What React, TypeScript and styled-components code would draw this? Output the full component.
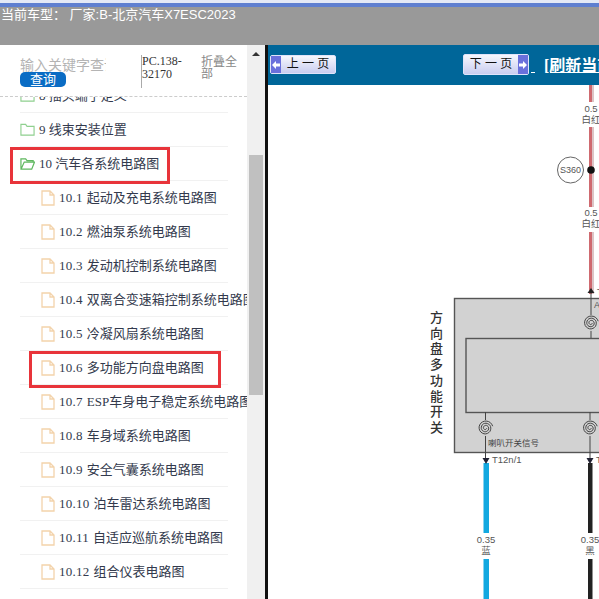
import React from 'react';
import styled, { createGlobalStyle } from 'styled-components';

const SERIF = '"Liberation Serif", "Noto Sans CJK SC", serif';
const SANS = '"Liberation Sans", "Noto Sans CJK SC", sans-serif';

const GlobalStyle = createGlobalStyle`
  html, body { margin: 0; padding: 0; background: #fff; overflow: hidden; }
`;

const Page = styled.div`
  width: 599px;
  height: 599px;
  display: flex;
  flex-direction: column;
  overflow: hidden;
`;
const TopEdge = styled.div`
  height: 3px;
  background: #e4e9f6;
  border-bottom: 4px solid #5f7fd0;
  flex: none;
`;
const ModelBar = styled.div`
  height: 38px;
  flex: none;
  background: #999;
  color: #fff;
  font: 13px/15px ${SANS};
  padding-left: 1px;
  white-space: nowrap;
`;
const Body = styled.div`
  flex: 1;
  min-height: 0;
  display: flex;
`;
const Sidebar = styled.div`
  width: 265px;
  flex: none;
  display: flex;
  background: #fff;
`;
const SideMain = styled.div`
  width: 247px;
  flex: none;
  overflow: hidden;
  display: flex;
  flex-direction: column;
`;
const SearchArea = styled.div`
  height: 52px;
  flex: none;
  box-sizing: border-box;
  border-bottom: 1px dashed #ccc;
  display: flex;
  padding: 10px 0 0 20px;
`;
const SearchCol = styled.div`
  width: 121px;
  flex: none;
`;
const Placeholder = styled.div`
  width: 86px;
  height: 17px;
  overflow: hidden;
  white-space: nowrap;
  color: #b4b4b4;
  font: 14px/20px ${SANS};
`;
const QueryButton = styled.button`
  display: block;
  width: 46px;
  height: 15px;
  padding: 0;
  border: 0;
  border-radius: 5px;
  background: #0a6cc4;
  color: #fff;
  font: 13px/15px ${SANS};
`;
const PartCode = styled.div`
  width: 60px;
  height: 33px;
  flex: none;
  box-sizing: border-box;
  border-left: 1px solid #aaa;
  font: 12px/13px ${SERIF};
  color: #333;
`;
const Collapse = styled.div`
  width: 38px;
  flex: none;
  color: #888;
  font: 12px/12px ${SANS};
  margin-top: 1px;
`;
const TreeViewport = styled.div`
  flex: 1;
  min-height: 0;
  overflow: hidden;
`;
const Tree = styled.div`
  margin-top: -18px;
  display: flex;
  flex-direction: column;
`;
const Row = styled.div<{ $child?: boolean }>`
  position: relative;
  height: 34px;
  box-sizing: border-box;
  width: 208px;
  margin-left: 20px;
  border-bottom: 1px solid #f1f1f1;
  display: flex;
  align-items: center;
  gap: 4px;
  padding-left: ${p => (p.$child ? '21px' : '0')};
  white-space: nowrap;
  color: #333a4d;
  font: 13px/16px ${SERIF};
`;
const RowNumber = styled.span`
  letter-spacing: 0.25px;
  margin-right: 4px;
`;
const RedBox = styled.span<{ $left: number; $width: number }>`
  position: absolute;
  left: ${p => p.$left}px;
  width: ${p => p.$width}px;
  top: 0;
  height: 37px;
  box-sizing: border-box;
  border: 3px solid #e8343a;
`;
const ScrollTrack = styled.div`
  width: 18px;
  flex: none;
  background: #f0f0f0;
  display: flex;
  flex-direction: column;
  align-items: center;
`;
const ScrollUp = styled.div`
  margin-top: 7px;
  width: 0;
  height: 0;
  border-left: 4px solid transparent;
  border-right: 4px solid transparent;
  border-bottom: 4px solid #333;
`;
const ScrollThumb = styled.div`
  margin-top: 99px;
  width: 14px;
  height: 240px;
  background: #c0c0c0;
`;
const Divider = styled.div`
  width: 3px;
  flex: none;
  background: #111;
`;
const Viewer = styled.div`
  flex: 1;
  min-width: 0;
  display: flex;
  flex-direction: column;
  overflow: hidden;
`;
const ViewerHead = styled.div`
  height: 40px;
  flex: none;
  background: #006699;
  display: flex;
  align-items: flex-start;
  padding: 10px 0 0 2px;
  box-sizing: border-box;
  white-space: nowrap;
`;
const PageButton = styled.div<{ $next?: boolean }>`
  width: 66px;
  height: ${p => (p.$next ? '21px' : '19px')};
  margin-top: ${p => (p.$next ? '-1px' : '0')};
  flex: none;
  box-sizing: border-box;
  display: flex;
  flex-direction: ${p => (p.$next ? 'row-reverse' : 'row')};
  align-items: center;
  background: linear-gradient(#f6f7fd, #c9cdf0);
  border: 1px solid #dfe3fa;
  border-radius: 2px;
  color: #111;
  font: 12px/15px ${SANS};
  margin-right: ${p => (p.$next ? '0' : '127px')};
`;
const ArrowCap = styled.span`
  width: 10px;
  height: 100%;
  flex: none;
  background: #6a70dc;
  display: flex;
  align-items: center;
  justify-content: center;
`;
const PageLabel = styled.span`
  flex: 1;
  text-align: center;
`;
const Refresh = styled.a<{ $gap: number }>`
  margin: 1px 0 0 ${p => p.$gap}px;
  color: #fff;
  font: bold 16px/20px ${SERIF};
  text-decoration: underline;
`;
const Canvas = styled.svg`
  display: block;
  flex: 1;
  min-height: 0;
  width: 100%;
  background: #fff;
`;

const FolderIcon = ({ open }: { open?: boolean }) => (
  <svg width="15" height="15" viewBox="0 0 16 15" style={{ flex: 'none' }}>
    {open ? (
      <path d="M1 13V2.5h5l1.5 2H14V6H4.5L1.2 13.5H12.5L15.5 6H14" fill="none" stroke="#5fb85f" strokeWidth="1.3" />
    ) : (
      <path d="M1 13.5V2h5l1.5 2.2H15v9.3z" fill="none" stroke="#8fd08f" strokeWidth="1.2" />
    )}
  </svg>
);

const FileIcon = () => (
  <svg width="14" height="16" viewBox="0 0 14 16" style={{ flex: 'none' }}>
    <path d="M1 1h8l4 4v10H1z M9 1v4h4" fill="none" stroke="#f3d3ab" strokeWidth="1.3" />
  </svg>
);

const Arrow = ({ dir }: { dir: 'left' | 'right' }) => (
  <svg width="8" height="8" viewBox="0 0 8 8">
    <path d={dir === 'left' ? 'M0 4l4-4v2.5h4v3H4V8z' : 'M8 4L4 0v2.5H0v3h4V8z'} fill="#fff" />
  </svg>
);

// three turns of an Archimedean spiral, like the connector symbol on the plan
const spiralPoints = (cx: number, cy: number) => {
  const pts: string[] = [];
  for (let a = 0; a <= Math.PI * 6; a += 0.3) {
    const r = 1 + (a / (Math.PI * 6)) * 6.5;
    pts.push(`${(cx + r * Math.cos(a)).toFixed(1)},${(cy + r * Math.sin(a)).toFixed(1)}`);
  }
  return pts.join(' ');
};

const Coil = ({ x, y }: { x: number; y: number }) => (
  <g>
    <circle cx={x} cy={y} r="8" fill="#d2d2d2" />
    <polyline points={spiralPoints(x, y)} fill="none" stroke="#444" strokeWidth="1" />
  </g>
);

const RedWhiteWire = ({ y, height }: { y: number; height: number }) => (
  <g>
    <rect x="589" y={y} width="3" height={height} fill="#cf6a70" />
    <rect x="592" y={y} width="2" height={height} fill="#dcc4c6" />
  </g>
);

const WireLabel = ({ x, y, size, text }: { x: number; y: number; size: string; text: string }) => (
  <g fill="#555" textAnchor="middle" fontSize="9.5">
    <text x={x} y={y} fontFamily="Liberation Sans">{size}</text>
    <text x={x} y={y + 11} fontFamily="Noto Sans CJK SC">{text}</text>
  </g>
);

const sections = [
  ['10.1', '起动及充电系统电路图'],
  ['10.2', '燃油泵系统电路图'],
  ['10.3', '发动机控制系统电路图'],
  ['10.4', '双离合变速箱控制系统电路图'],
  ['10.5', '冷凝风扇系统电路图'],
  ['10.6', '多功能方向盘电路图'],
  ['10.7', 'ESP车身电子稳定系统电路图'],
  ['10.8', '车身域系统电路图'],
  ['10.9', '安全气囊系统电路图'],
  ['10.10', '泊车雷达系统电路图'],
  ['10.11', '自适应巡航系统电路图'],
  ['10.12', '组合仪表电路图'],
];

const Diagram = () => {
  const line = '#555';
  return (
    <Canvas viewBox="268 85 331 514">
      <RedWhiteWire y={85} height={17} />
      <RedWhiteWire y={127} height={80} />
      <RedWhiteWire y={232} height={62} />
      <WireLabel x={591} y={112} size="0.5" text="白红" />
      <WireLabel x={591} y={216} size="0.5" text="白红" />
      <circle cx="570.5" cy="170" r="13" fill="#fff" stroke="#666" strokeWidth="1" />
      <text x="570.5" y="173" fontSize="9" fill="#555" textAnchor="middle" fontFamily="Liberation Sans">S360</text>
      <circle cx="591" cy="170" r="3.8" fill="#111" />
      <path d="M591 288l-3.5 5h7z" fill="#222" />
      <text x="597" y="295" fontSize="9" fill="#555" fontFamily="Liberation Sans">T</text>

      {/* switch block */}
      <rect x="454.5" y="298.5" width="150" height="154" fill="#d2d2d2" stroke={line} strokeWidth="1.4" />
      <rect x="466" y="338.5" width="140" height="74" fill="#d2d2d2" stroke={line} strokeWidth="1.4" />
      <line x1="591" y1="293" x2="591" y2="338" stroke="#444" />
      <line x1="485.5" y1="412" x2="485.5" y2="462" stroke="#444" />
      <line x1="590" y1="412" x2="590" y2="462" stroke="#444" />
      <Coil x={591} y={323} />
      <Coil x={485.5} y={428} />
      <Coil x={590} y={428} />
      <text x="594" y="308" fontSize="9" fill="#555" fontFamily="Liberation Sans">A</text>
      <text x="488" y="446" fontSize="8.5" fill="#444" fontFamily="Noto Sans CJK SC">喇叭开关信号</text>
      <text x="492" y="463" fontSize="9.5" fill="#555" fontFamily="Liberation Sans">T12n/1</text>
      <text x="596" y="463" fontSize="9.5" fill="#555" fontFamily="Liberation Sans">T</text>
      {['方', '向', '盘', '多', '功', '能', '开', '关'].map((c, i) => (
        <text key={c} x="436.5" y={322 + i * 15.7} fontSize="13" fontWeight="500" fill="#333" textAnchor="middle" fontFamily="Noto Sans CJK SC">
          {c}
        </text>
      ))}

      {/* output wires */}
      <rect x="483.5" y="463" width="5.5" height="70" fill="#12a8e0" />
      <rect x="483.5" y="559" width="5.5" height="40" fill="#12a8e0" />
      <rect x="588" y="463" width="4.5" height="70" fill="#222" />
      <rect x="588" y="559" width="4.5" height="40" fill="#222" />
      <path d="M486 464l-3.5-6h7z M590 464l-3.5-6h7z" fill="#223" />
      <WireLabel x={486} y={543} size="0.35" text="蓝" />
      <WireLabel x={590} y={543} size="0.35" text="黑" />
    </Canvas>
  );
};

export default function App() {
  return (
    <Page>
      <GlobalStyle />
      <TopEdge />
      <ModelBar>当前车型： 厂家:B-北京汽车X7ESC2023</ModelBar>
      <Body>
        <Sidebar>
          <SideMain>
            <SearchArea>
              <SearchCol>
                <Placeholder>输入关键字查询</Placeholder>
                <QueryButton>查询</QueryButton>
              </SearchCol>
              <PartCode>PC.138-32170</PartCode>
              <Collapse>折叠全部</Collapse>
            </SearchArea>
            <TreeViewport>
              <Tree>
                <Row>
                  <FolderIcon />8 插头端子定义
                </Row>
                <Row>
                  <FolderIcon />9 线束安装位置
                </Row>
                <Row>
                  <FolderIcon open />10 汽车各系统电路图
                  <RedBox $left={-10} $width={160} />
                </Row>
                {sections.map(([num, label], i) => (
                  <Row $child key={num}>
                    <FileIcon />
                    <span>
                      <RowNumber>{num}</RowNumber>
                      {label}
                    </span>
                    {i === 5 && <RedBox $left={9} $width={192} />}
                  </Row>
                ))}
              </Tree>
            </TreeViewport>
          </SideMain>
          <ScrollTrack>
            <ScrollUp />
            <ScrollThumb />
          </ScrollTrack>
        </Sidebar>
        <Divider />
        <Viewer>
          <ViewerHead>
            <PageButton>
              <ArrowCap>
                <Arrow dir="left" />
              </ArrowCap>
              <PageLabel>上 一 页</PageLabel>
            </PageButton>
            <PageButton $next>
              <ArrowCap>
                <Arrow dir="right" />
              </ArrowCap>
              <PageLabel>下 一 页</PageLabel>
            </PageButton>
            <Refresh $gap={2}>&nbsp;</Refresh>
            <Refresh $gap={9}>[刷新当前页]</Refresh>
          </ViewerHead>
          <Diagram />
        </Viewer>
      </Body>
    </Page>
  );
}
